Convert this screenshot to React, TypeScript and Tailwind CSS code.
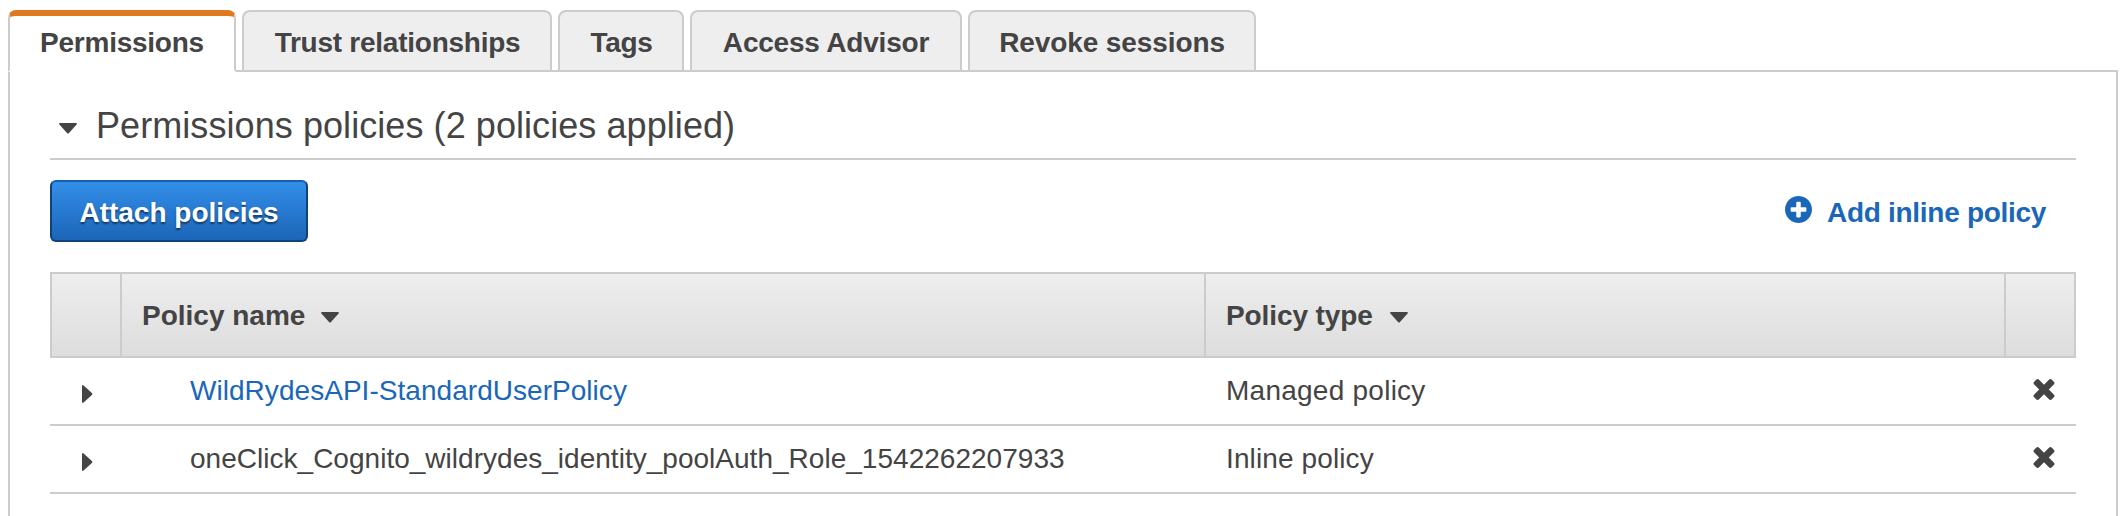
import React from "react";

const tabs = [
  { label: "Trust relationships", box: "w-[310px] pl-px", text: "tracking-[-0.25px]" },
  { label: "Tags", box: "w-[126px] pl-px", text: "tracking-[-0.3px]" },
  { label: "Access Advisor", box: "w-[272px]", text: "tracking-[-0.2px]" },
  { label: "Revoke sessions", box: "w-[288px]", text: "tracking-[-0.1px]" },
];

const policies = [
  {
    name: "WildRydesAPI-StandardUserPolicy",
    type: "Managed policy",
    nameStyle: "text-[#1a67ba] tracking-[0.04px]",
    typeStyle: "tracking-[0.25px]",
  },
  {
    name: "oneClick_Cognito_wildrydes_identity_poolAuth_Role_1542262207933",
    type: "Inline policy",
    nameStyle: "tracking-[0.02px]",
    typeStyle: "tracking-[0.12px]",
  },
];

function CaretDown({ className = "" }: { className?: string }) {
  return (
    <svg className={`h-[11px] w-[18px] shrink-0 ${className}`} viewBox="0 0 18 11" fill="#444">
      <path d="M1 0H17Q18.4 0.4 17.6 1.6L10 9.9Q9 10.9 8 9.9L0.4 1.6Q-0.4 0.4 1 0Z" />
    </svg>
  );
}

function CaretRight() {
  return (
    <svg className="mt-[6px] h-[18px] w-[11px] shrink-0" viewBox="0 0 11 18" fill="#444">
      <path d="M0 1V17Q0.4 18.4 1.6 17.6L9.9 10Q10.9 9 9.9 8L1.6 0.4Q0.4 -0.4 0 1Z" />
    </svg>
  );
}

function PlusCircle() {
  return (
    <svg className="-mt-[3px] h-[27px] w-[27px] shrink-0" viewBox="128 128 1536 1536" fill="#1a67ba">
      <path d="M1344 960v-128q0-26-19-45t-45-19h-256v-256q0-26-19-45t-45-19h-128q-26 0-45 19t-19 45v256h-256q-26 0-45 19t-19 45v128q0 26 19 45t45 19h256v256q0 26 19 45t45 19h128q26 0 45-19t19-45v-256h256q26 0 45-19t19-45zm320-64q0 209-103 385.5t-279.5 279.5-385.5 103-385.5-103-279.5-279.5-103-385.5 103-385.5 279.5-279.5 385.5-103 385.5 103 279.5 279.5 103 385.5z" />
    </svg>
  );
}

function Cross() {
  return (
    <svg className="-mt-[4px] h-[21px] w-[22px] shrink-0" viewBox="302 366 1188 1188" fill="#444">
      <path d="M1490 1322q0 40-28 68l-136 136q-28 28-68 28t-68-28l-294-294-294 294q-28 28-68 28t-68-28l-136-136q-28-28-28-68t28-68l294-294-294-294q-28-28-28-68t28-68l136-136q28-28 68-28t68 28l294 294 294-294q28-28 68-28t68 28l136 136q28 28 28 68t-28 68l-294 294 294 294q28 28 28 68z" />
    </svg>
  );
}

export default function App() {
  return (
    <div className="flex h-[516px] w-[2122px] flex-col overflow-hidden bg-white pl-2 pr-[4px] pt-[10px] font-['Liberation_Sans',Arial,sans-serif] text-[28px] leading-[32px] text-[#444]">
      <div className="z-10 -mb-[2px] flex gap-[6px] font-bold">
        <div className="flex h-[62px] w-[228px] justify-center rounded-t-[8px] border-x-2 border-b-2 border-t-[6px] border-x-[#ccc] border-b-white border-t-[#e07820] bg-white pt-[11px] tracking-[-0.25px]">
          Permissions
        </div>
        {tabs.map((tab) => (
          <div
            key={tab.label}
            className={`flex h-[60px] justify-center whitespace-nowrap rounded-t-[8px] border-2 border-b-0 border-[#ccc] bg-[#eee] pt-[15px] ${tab.box} ${tab.text}`}
          >
            {tab.label}
          </div>
        ))}
      </div>

      <div className="flex flex-1 flex-col border-2 border-b-0 border-[#ccc] px-[40px]">
        <div className="flex h-[88px] items-center border-b-2 border-[#ccc] pl-[9px] pt-[22px]">
          <CaretDown className="mt-[4px]" />
          <h2 className="ml-[19px] text-[36px] leading-[40px] tracking-[0.07px]">
            Permissions policies (2 policies applied)
          </h2>
        </div>

        <div className="mt-5 flex h-[62px] items-center justify-between">
          <button className="flex h-[62px] w-[258px] items-center justify-center rounded-[6px] border-2 border-[#0f4378] border-t-[#1a5fae] bg-linear-to-b from-[#338ee9] to-[#1b66b8] pt-[3px] font-bold text-white [text-shadow:0_2px_2px_rgba(0,0,0,0.5)]">
            Attach policies
          </button>
          <div className="flex items-center pr-[30px] font-bold text-[#1a67ba]">
            <PlusCircle />
            <span className="ml-[15px] pt-[4px] tracking-[-0.3px]">Add inline policy</span>
          </div>
        </div>

        <div className="mt-[30px] grid h-[86px] border-2 border-[#ccc] bg-linear-to-b from-[#eee] to-[#ddd] font-bold [grid-template-columns:70px_1084px_800px_1fr]">
          <div className="border-r-2 border-[#ccc]" />
          <div className="flex items-center border-r-2 border-[#ccc] pl-[20px] pt-[2px]">
            Policy name
            <CaretDown className="ml-[16px] mt-[3px]" />
          </div>
          <div className="flex items-center border-r-2 border-[#ccc] pl-[20px] pt-[2px] tracking-[-0.1px]">
            Policy type
            <CaretDown className="ml-[17px] mt-[3px]" />
          </div>
          <div />
        </div>

        {policies.map((policy) => (
          <div
            key={policy.name}
            className="grid h-[68px] items-center border-b-2 border-[#ccc] [grid-template-columns:72px_1084px_800px_1fr]"
          >
            <div className="pl-[32px]">
              <CaretRight />
            </div>
            <div className={`pl-[68px] ${policy.nameStyle}`}>{policy.name}</div>
            <div className={`pl-[20px] ${policy.typeStyle}`}>{policy.type}</div>
            <div className="flex justify-end pr-[21px]">
              <Cross />
            </div>
          </div>
        ))}
      </div>
    </div>
  );
}
